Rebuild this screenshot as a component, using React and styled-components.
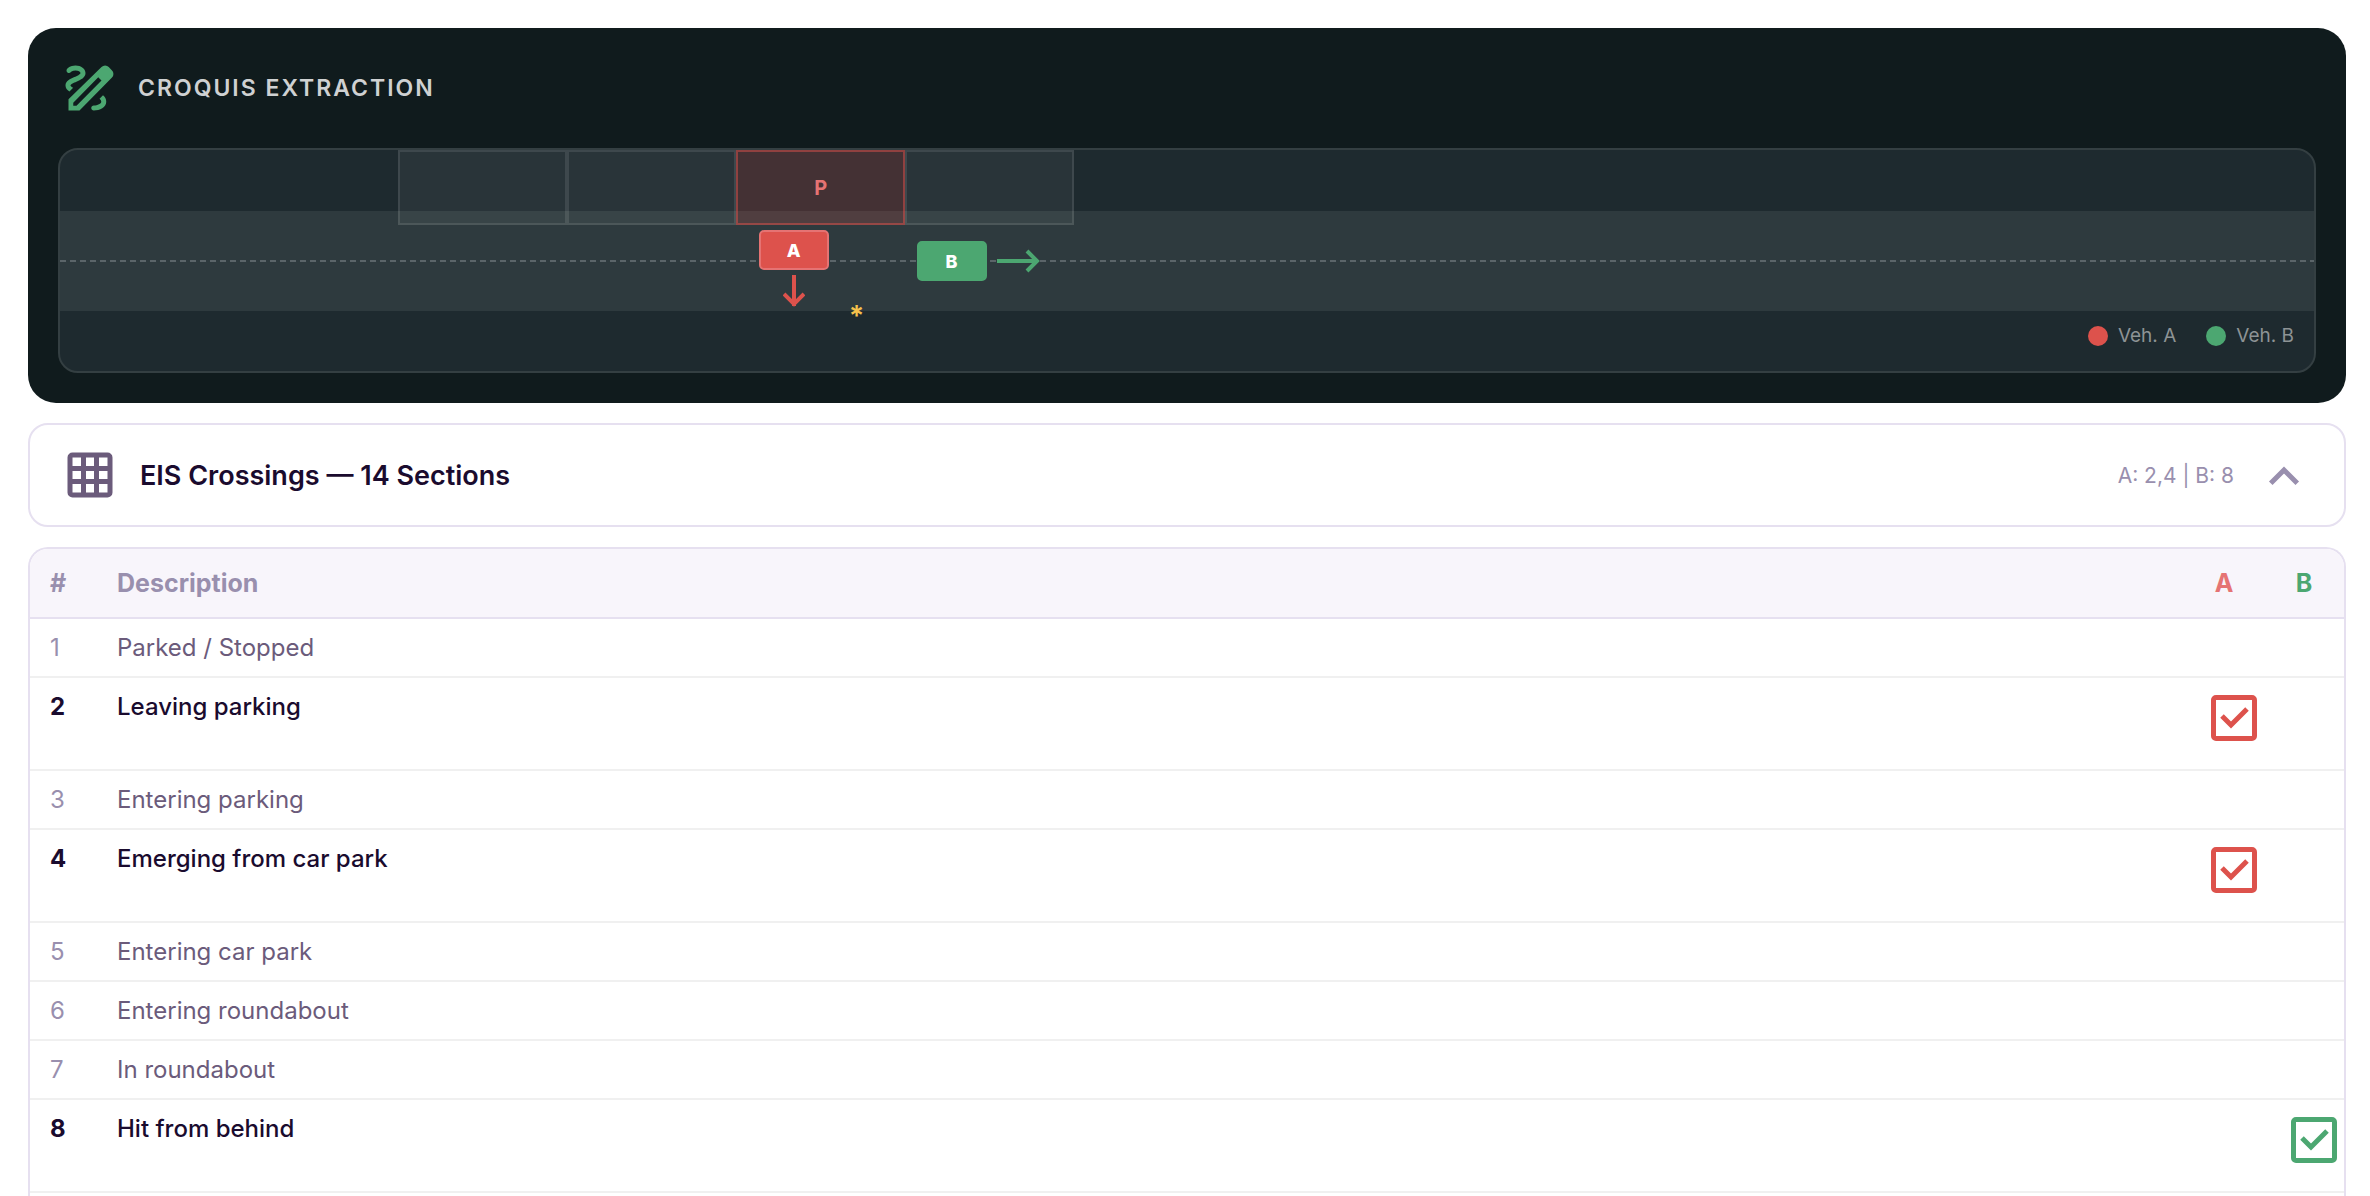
import React, { useState } from 'react';
import styled, { createGlobalStyle } from 'styled-components';

const GlobalStyle = createGlobalStyle`
  * { box-sizing: border-box; }
  body {
    margin: 0;
    background: #fff;
    font-family: Inter, "Liberation Sans", sans-serif;
    color: #1a0b2e;
  }
`

const Page = styled.main`
  display: flex;
  flex-direction: column;
  gap: 20px;
  padding: 28px 24px 0 28px;
`

const Card = styled.section`
  display: flex;
  flex-direction: column;
  gap: 30px;
  padding: 30px;
  border-radius: 28px;
  background: #101b1d;
`

const CardHeader = styled.header`
  display: flex;
  align-items: center;
  gap: 20px;
`

const Icon = styled.svg`
  flex: none;
  width: 60px;
  height: 60px;
  color: ${({ $color }) => $color};
`

const CardTitle = styled.h2`
  margin: 0;
  font-size: 23px;
  font-weight: 600;
  letter-spacing: 2px;
  color: #cfd1d2;
`

const Canvas = styled.div`
  position: relative;
  height: 225px;
  border: 2px solid #343f42;
  border-radius: 20px;
  background: #1e2a2f;
  overflow: hidden;
`

const Road = styled.div`
  position: absolute;
  left: 0;
  right: 0;
  top: 61px;
  height: 100px;
  background: #2e3a3e;
`

const CentreLine = styled.svg`
  position: absolute;
  left: 0;
  top: 110px;
  width: 100%;
  height: 2px;
`

const Bays = styled.div`
  position: absolute;
  top: 0;
  left: 15%;
  width: 30%;
  height: 75px;
  display: grid;
  grid-template-columns: repeat(4, 1fr);
`

const Bay = styled.div`
  display: flex;
  align-items: center;
  justify-content: center;
  border: 2px solid ${({ $taken }) => ($taken ? 'rgba(220, 82, 76, 0.5)' : 'rgba(255, 255, 255, 0.1)')};
  background: ${({ $taken }) => ($taken ? 'rgba(220, 82, 76, 0.2)' : 'rgba(255, 255, 255, 0.05)')};
  color: #e57373;
  font-size: 20px;
  font-weight: 700;
`

const Vehicle = styled.div`
  position: absolute;
  left: ${({ $left }) => $left};
  top: ${({ $top }) => $top};
  display: flex;
  align-items: center;
  justify-content: center;
  width: 70px;
  height: 40px;
  border: 2px solid ${({ $edge }) => $edge};
  border-radius: 5px;
  background: ${({ $color }) => $color};
  color: #fff;
  font-size: 18px;
  font-weight: 800;
`

const Arrow = styled.svg`
  position: absolute;
  fill: none;
  stroke: ${({ $color }) => $color};
  stroke-width: 4;
`

const DownArrow = styled(Arrow)`
  left: 22px;
  top: 43px;
`

const RightArrow = styled(Arrow)`
  left: 78px;
  top: 6px;
`

const Impact = styled.span`
  position: absolute;
  left: 35%;
  top: 152px;
  font-size: 28px;
  line-height: 28px;
  font-weight: 600;
  color: #f5c24c;
`

const Legend = styled.div`
  position: absolute;
  right: 20px;
  bottom: 23px;
  display: flex;
  gap: 30px;
`

const LegendItem = styled.span`
  display: flex;
  align-items: center;
  gap: 10px;
  font-size: 19px;
  line-height: 24px;
  color: #8d9395;

  &::before {
    content: '';
    width: 20px;
    height: 20px;
    border-radius: 50%;
    background: ${({ $color }) => $color};
  }
`

const Toggle = styled.button`
  display: flex;
  align-items: center;
  gap: 20px;
  width: 100%;
  padding: 20px 30px;
  border: 2px solid #e6e0f0;
  border-radius: 20px;
  background: #fff;
  color: inherit;
  font: inherit;
  text-align: left;
  cursor: pointer;
`

const ToggleTitle = styled.span`
  flex: 1;
  font-size: 27px;
  font-weight: 600;
`

const ToggleInfo = styled.span`
  font-size: 21px;
  color: #998fae;
`

const TableBox = styled.div`
  padding-bottom: 20px;
  border: 2px solid #e6e0f0;
  border-bottom: none;
  border-radius: 20px 20px 0 0;
  overflow: hidden;
`

const Table = styled.table`
  width: 100%;
  table-layout: fixed;
  border-collapse: separate;
  border-spacing: 0;
  font-size: 24px;
  line-height: 27px;
`

const Col = styled.col`
  width: ${({ $width }) => $width};
`

const Th = styled.th`
  padding: 20px 0 20px 20px;
  border-bottom: 2px solid #e6e0f0;
  background: #f8f5fb;
  color: ${({ $color }) => $color || '#998fae'};
  font-size: 25px;
  font-weight: 700;
  line-height: 28px;
  text-align: left;
`

const MarkTh = styled(Th)`
  padding: 20px 0;
  text-align: center;
`

const Td = styled.td`
  height: ${({ $marked }) => ($marked ? '93px' : '59px')};
  padding: 15px 0 15px 20px;
  border-bottom: 2px solid #f0f0f0;
  vertical-align: top;
  color: ${({ $marked }) => ($marked ? '#1a0b2e' : '#6b5b7b')};
  font-weight: ${({ $marked }) => ($marked ? 500 : 400)};
`

const NumTd = styled(Td)`
  color: ${({ $marked }) => ($marked ? '#1a0b2e' : '#998fae')};
  font-weight: ${({ $marked }) => ($marked ? 700 : 400)};
`

const MarkTd = styled(Td)`
  padding: 17px 0 0 27px;
`

const Mark = styled.label`
  display: grid;
  width: 46px;
  height: 46px;
  color: ${({ $color }) => $color};

  input,
  svg {
    grid-area: 1 / 1;
    width: 46px;
    height: 46px;
    margin: 0;
  }

  input {
    appearance: none;
    color: inherit;
    border: 5px solid currentColor;
    border-radius: 5px;
  }

  svg {
    pointer-events: none;
    fill: none;
    stroke: currentColor;
    stroke-width: 5;
  }

  input:not(:checked) + svg {
    visibility: hidden;
  }
`

const RED = '#dd524c';
const GREEN = '#4ca771';

const rows = [
    { id: 1, text: 'Parked / Stopped' },
    { id: 2, text: 'Leaving parking', a: true },
    { id: 3, text: 'Entering parking' },
    { id: 4, text: 'Emerging from car park', a: true },
    { id: 5, text: 'Entering car park' },
    { id: 6, text: 'Entering roundabout' },
    { id: 7, text: 'In roundabout' },
    { id: 8, text: 'Hit from behind', b: true },
];

const DrawIcon = () => (
    <Icon $color={GREEN} viewBox="0 0 24 24" fill="currentColor" aria-hidden="true">
        <path fillRule="evenodd" d="M4.2 21v-4.5L17.4 3.6a2 2 0 0 1 2.9 0L21.6 5a2 2 0 0 1 0 2.8L8.6 21zM6.1 19.1h1.3L17.4 9l-1.3-1.3L6.1 17.9z" />
        <path d="M19.3 17.5c0 2.19-2.54 3.5-5 3.5-.55 0-1-.45-1-1s.45-1 1-1c1.54 0 3-.73 3-1.5 0-.47-.3-.87-.7-1.2l1.4-1.4c.8.63 1.3 1.4 1.3 2.6z" />
        <path d="M4.58 13.35C3.61 12.79 3 12.06 3 11c0-1.8 1.89-2.63 3.56-3.36C7.59 7.18 9 6.56 9 6c0-.41-.78-1-2-1-1.26 0-1.8.61-1.83.64-.35.41-.98.46-1.4.12-.41-.34-.49-.95-.15-1.38C3.73 4.24 4.76 3 7 3s4 1.32 4 3c0 1.87-1.93 2.72-3.64 3.47C6.42 9.88 5 10.5 5 11c0 .31.43.6 1.07.86z" />
    </Icon>
);

const GridIcon = () => (
    <Icon $color="#6b5b7b" viewBox="0 0 24 24" fill="none" stroke="currentColor" strokeWidth="2" aria-hidden="true">
        <rect x="4" y="4" width="16" height="16" rx="1" />
        <path d="M9.4 4v16M14.6 4v16M4 9.4h16M4 14.6h16" />
    </Icon>
);

const Chevron = ({ open }) => (
    <Icon $color="#998fae" viewBox="0 0 24 24" fill="none" stroke="currentColor" strokeWidth="2" aria-hidden="true">
        <path d={open ? 'M6.7 15.3 12 10l5.3 5.3' : 'M6.7 9.3 12 14.6l5.3-5.3'} />
    </Icon>
);

const MarkBox = ({ color, label }) => (
    <Mark $color={color}>
        <input type="checkbox" defaultChecked aria-label={label} />
        <svg viewBox="0 0 46 46">
            <path d="M11 21l9 9 16-16" />
        </svg>
    </Mark>
);

const Croquis = () => (
    <Card>
        <CardHeader>
            <DrawIcon />
            <CardTitle>CROQUIS EXTRACTION</CardTitle>
        </CardHeader>
        <Canvas>
            <Road />
            <CentreLine aria-hidden="true">
                <line x1="0" y1="1" x2="100%" y2="1" stroke="#5b6569" strokeWidth="2" strokeDasharray="6 4" />
            </CentreLine>
            <Bays>
                <Bay />
                <Bay />
                <Bay $taken>P</Bay>
                <Bay />
            </Bays>
            <Vehicle $left="31%" $top="80px" $color={RED} $edge="#e57373">
                A
                <DownArrow $color={RED} width="22" height="36">
                    <path d="M11 0v31M1 19l10 10 10-10" />
                </DownArrow>
            </Vehicle>
            <Vehicle $left="38%" $top="91px" $color={GREEN} $edge={GREEN}>
                B
                <RightArrow $color={GREEN} width="46" height="24">
                    <path d="M0 12h41M30 2l10 10-10 10" />
                </RightArrow>
            </Vehicle>
            <Impact>*</Impact>
            <Legend>
                <LegendItem $color={RED}>Veh. A</LegendItem>
                <LegendItem $color={GREEN}>Veh. B</LegendItem>
            </Legend>
        </Canvas>
    </Card>
);

const App = () => {
    const [open, setOpen] = useState(true);

    return (
        <Page>
            <GlobalStyle />
            <Croquis />
            <Toggle type="button" aria-expanded={open} onClick={() => setOpen(!open)}>
                <GridIcon />
                <ToggleTitle>EIS Crossings — 14 Sections</ToggleTitle>
                <ToggleInfo>A: 2,4 | B: 8</ToggleInfo>
                <Chevron open={open} />
            </Toggle>
            {open && (
                <TableBox>
                    <Table>
                        <colgroup>
                            <Col $width="67px" />
                            <Col $width="auto" />
                            <Col $width="80px" />
                            <Col $width="80px" />
                        </colgroup>
                        <thead>
                            <tr>
                                <Th>#</Th>
                                <Th>Description</Th>
                                <MarkTh $color="#e57373">A</MarkTh>
                                <MarkTh $color={GREEN}>B</MarkTh>
                            </tr>
                        </thead>
                        <tbody>
                            {rows.map(({ id, text, a, b }) => (
                                <tr key={id}>
                                    <NumTd $marked={a || b}>{id}</NumTd>
                                    <Td $marked={a || b}>{text}</Td>
                                    <MarkTd>{a && <MarkBox color={RED} label={`${text}, vehicle A`} />}</MarkTd>
                                    <MarkTd>{b && <MarkBox color={GREEN} label={`${text}, vehicle B`} />}</MarkTd>
                                </tr>
                            ))}
                        </tbody>
                    </Table>
                </TableBox>
            )}
        </Page>
    );
};

export default App;
